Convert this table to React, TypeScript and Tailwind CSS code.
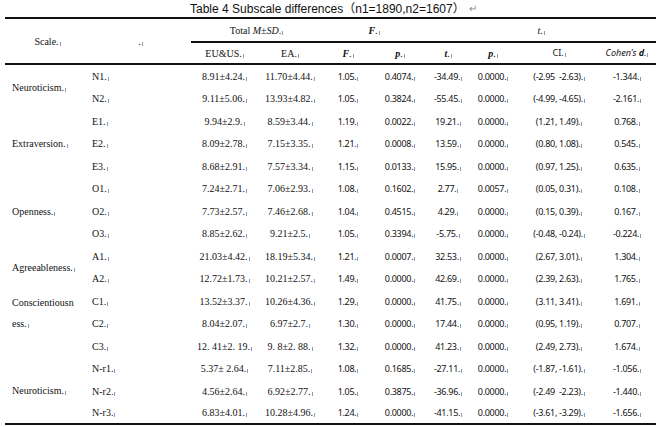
const serif = "font-['Liberation_Serif',serif]";
const sans = "font-['Noto_Sans',sans-serif]";

type Vals = [string, string, string, string, string, string, string, string, string];

const groups: { label: React.ReactNode; top?: boolean; rows: Vals[] }[] = [
  {
    label: "Neuroticism",
    rows: [
      ["N1", "8.91±4.24", "11.70±4.44", "1.05", "0.4074", "-34.49", "0.0000", "(-2.95  -2.63)", "-1.344"],
      ["N2", "9.11±5.06", "13.93±4.82", "1.05", "0.3824", "-55.45", "0.0000", "(-4.99, -4.65)", "-2.161"],
    ],
  },
  {
    label: "Extraversion",
    rows: [
      ["E1", "9.94±2.9", "8.59±3.44", "1.19", "0.0022", "19.21", "0.0000", "(1.21, 1.49)", "0.768"],
      ["E2", "8.09±2.78", "7.15±3.35", "1.21", "0.0008", "13.59", "0.0000", "(0.80, 1.08)", "0.545"],
      ["E3", "8.68±2.91", "7.57±3.34", "1.15", "0.0133", "15.95", "0.0000", "(0.97, 1.25)", "0.635"],
    ],
  },
  {
    label: "Openness",
    rows: [
      ["O1", "7.24±2.71", "7.06±2.93", "1.08", "0.1602", "2.77", "0.0057", "(0.05, 0.31)", "0.108"],
      ["O2", "7.73±2.57", "7.46±2.68", "1.04", "0.4515", "4.29", "0.0000", "(0.15, 0.39)", "0.167"],
      ["O3", "8.85±2.62", "9.21±2.5", "1.05", "0.3394", "-5.75", "0.0000", "(-0.48, -0.24)", "-0.224"],
    ],
  },
  {
    label: "Agreeableness",
    rows: [
      ["A1", "21.03±4.42", "18.19±5.34", "1.21", "0.0007", "32.53", "0.0000", "(2.67, 3.01)", "1.304"],
      ["A2", "12.72±1.73", "10.21±2.57", "1.49", "0.0000", "42.69", "0.0000", "(2.39, 2.63)", "1.765"],
    ],
  },
  {
    label: (
      <>
        Conscientiousn
        <br />
        ess
      </>
    ),
    top: true,
    rows: [
      ["C1", "13.52±3.37", "10.26±4.36", "1.29", "0.0000", "41.75", "0.0000", "(3.11, 3.41)", "1.691"],
      ["C2", "8.04±2.07", "6.97±2.7", "1.30", "0.0000", "17.44", "0.0000", "(0.95, 1.19)", "0.707"],
      ["C3", "12. 41±2. 19", "9. 8±2. 88", "1.32", "0.0000", "41.23", "0.0000", "(2.49, 2.73)", "1.674"],
    ],
  },
  {
    label: "Neuroticism",
    rows: [
      ["N-r1", "5.37± 2.64", "7.11±2.85", "1.08", "0.1685", "-27.11", "0.0000", "(-1.87, -1.61)", "-1.056"],
      ["N-r2", "4.56±2.64", "6.92±2.77", "1.05", "0.3875", "-36.96", "0.0000", "(-2.49  -2.23)", "-1.440"],
      ["N-r3", "6.83±4.01", "10.28±4.96", "1.24", "0.0000", "-41.15", "0.0000", "(-3.61, -3.29)", "-1.656"],
    ],
  },
];

// Word's end-of-cell mark
const Mark = () => (
  <>
    .
    <span className="inline-block w-[1px] h-[4px] bg-[#8c9ab3] ml-[1px] align-[-1px]" />
  </>
);

const App = () => {
  const total = groups.reduce((n, g) => n + g.rows.length, 0);
  let idx = 0;

  return (
    <div className="w-[661px] h-[427px] bg-white text-[#111] overflow-hidden">
      <div className="h-[17px] flex items-center pl-[190px] text-[12px] font-['Liberation_Sans','Noto_Sans_CJK_SC',sans-serif] whitespace-nowrap">
        Table 4 Subscale differences（n1=1890,n2=1607）
        <span className="text-[10px] text-[#888] ml-[4px]">↵</span>
      </div>
      <table className="ml-[5px] w-[651px] table-fixed border-separate border-spacing-0">
        <colgroup>
          <col className="w-[85px]" />
          <col className="w-[101px]" />
          <col className="w-[67px]" />
          <col className="w-[64px]" />
          <col className="w-[52px]" />
          <col className="w-[52px]" />
          <col className="w-[44px]" />
          <col className="w-[46px]" />
          <col className="w-[86px]" />
          <col className="w-[54px]" />
        </colgroup>
        <thead>
          <tr className="h-[26px]">
            <td rowSpan={2} className={`${serif} text-[10px] text-center border-t-2 border-b-2 border-[#111] p-0`}>
              Scale<Mark />
            </td>
            <td rowSpan={2} className={`${serif} text-[10px] text-center border-t-2 border-b-2 border-[#111] p-0`}>
              <Mark />
            </td>
            <td colSpan={2} className={`${serif} text-[10px] text-center border-t-2 border-b-2 border-[#111] p-0`}>
              Total <i>M</i>±<i>SD</i>
              <Mark />
            </td>
            <td colSpan={2} className={`${serif} text-[10px] text-center border-t-2 border-b-2 border-[#111] p-0`}>
              <b>
                <i>F</i>
              </b>
              <Mark />
            </td>
            <td colSpan={4} className={`${serif} text-[10px] text-center border-t-2 border-b-2 border-[#111] p-0`}>
              <i>t</i>
              <Mark />
            </td>
          </tr>
          <tr className="h-[22px]">
            <td className={`${serif} text-[10px] text-center border-b-2 border-[#111] p-0`}>
              EU&amp;US<Mark />
            </td>
            <td className={`${serif} text-[10px] text-center border-b-2 border-[#111] p-0`}>
              EA<Mark />
            </td>
            <td className={`${serif} text-[10px] text-center border-b-2 border-[#111] p-0`}>
              <b>
                <i>F</i>
              </b>
              <Mark />
            </td>
            <td className={`${serif} text-[10px] text-center border-b-2 border-[#111] p-0`}>
              <b>
                <i>p</i>
              </b>
              <Mark />
            </td>
            <td className={`${serif} text-[10px] text-center border-b-2 border-[#111] p-0`}>
              <b>
                <i>t</i>
              </b>
              <Mark />
            </td>
            <td className={`${serif} text-[10px] text-center border-b-2 border-[#111] p-0`}>
              <b>
                <i>p</i>
              </b>
              <Mark />
            </td>
            <td className={`${sans} text-[9px] text-center border-b-2 border-[#111] p-0`}>
              CI<Mark />
            </td>
            <td className={`${sans} text-[9px] text-center border-b-2 border-[#111] p-0 pr-[4px] italic`}>
              Cohen's <b>d</b>
              <Mark />
            </td>
          </tr>
        </thead>
        <tbody>
          {groups.map((g, gi) =>
            g.rows.map((r, i) => {
              idx++;
              const last = idx === total;
              const b = last ? "border-b-2 border-[#111]" : "";
              return (
                <tr key={`${gi}-${i}`} className="h-[22.5px]">
                  {i === 0 && (
                    <td
                      rowSpan={g.rows.length}
                      className={`${serif} text-[10px] p-0 pl-[7px] ${
                        g.top ? "align-top pt-[2px] leading-[21px]" : "align-middle"
                      } ${gi === groups.length - 1 ? "border-b-2 border-[#111]" : ""}`}
                    >
                      {g.label}
                      <Mark />
                    </td>
                  )}
                  <td className={`${serif} text-[10px] p-0 pl-[2px] ${b}`}>
                    {r[0]}
                    <Mark />
                  </td>
                  <td className={`${serif} text-[10px] p-0 text-center whitespace-pre ${b}`}>
                    {r[1]}
                    <Mark />
                  </td>
                  <td className={`${serif} text-[10px] p-0 text-center whitespace-pre ${b}`}>
                    {r[2]}
                    <Mark />
                  </td>
                  {r.slice(3).map((v, k) => (
                    <td
                      key={k}
                      className={`${sans} text-[9px] tracking-[-0.3px] p-0 text-center whitespace-pre ${
                        k === 5 ? "pr-[4px]" : ""
                      } ${b}`}
                    >
                      {v}
                      <Mark />
                    </td>
                  ))}
                </tr>
              );
            })
          )}
        </tbody>
      </table>
    </div>
  );
};

export default App;
